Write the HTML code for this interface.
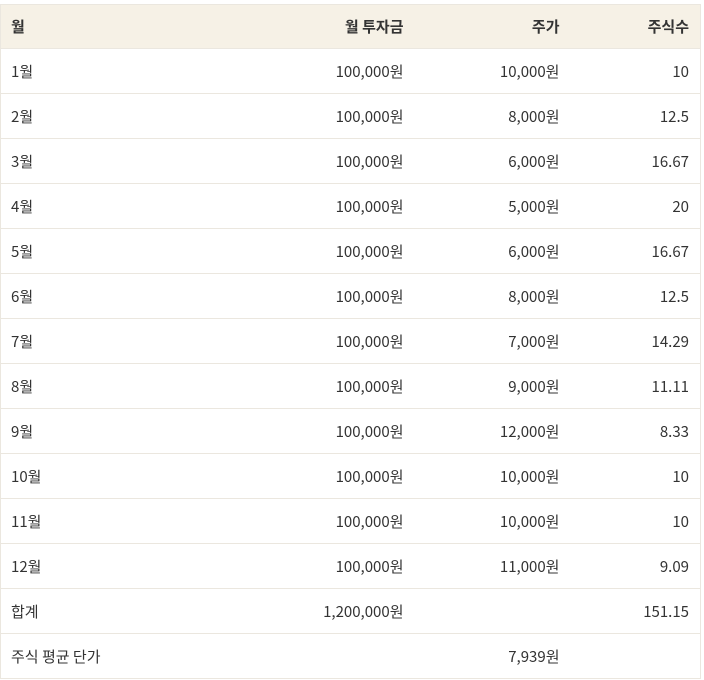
<!DOCTYPE html>
<html><head><meta charset="utf-8"><style>
body{margin:0;background:#fff;}
table{position:absolute;left:0;top:4px;border-collapse:collapse;width:700px;table-layout:fixed;font-family:"Noto Sans CJK KR","Liberation Sans",sans-serif;font-size:15px;color:#333;border:1px solid #ebe7df;}
th,td{height:44px;padding:0 10px;border-bottom:1px solid #ebe7df;text-align:right;box-sizing:border-box;line-height:20px;}
td{height:45px;padding-top:2px;}
th{background:#f6f1e6;font-weight:bold;height:44px;padding-top:1px;}
th:first-child,td:first-child{text-align:left;}
th:last-child,td:last-child{padding-right:11px;}
</style></head><body>
<table>
<colgroup><col style="width:250px"><col style="width:163px"><col style="width:156px"><col style="width:131px"></colgroup>
<tr><th>월</th><th>월 투자금</th><th>주가</th><th>주식수</th></tr>
<tr><td>1월</td><td>100,000원</td><td>10,000원</td><td>10</td></tr>
<tr><td>2월</td><td>100,000원</td><td>8,000원</td><td>12.5</td></tr>
<tr><td>3월</td><td>100,000원</td><td>6,000원</td><td>16.67</td></tr>
<tr><td>4월</td><td>100,000원</td><td>5,000원</td><td>20</td></tr>
<tr><td>5월</td><td>100,000원</td><td>6,000원</td><td>16.67</td></tr>
<tr><td>6월</td><td>100,000원</td><td>8,000원</td><td>12.5</td></tr>
<tr><td>7월</td><td>100,000원</td><td>7,000원</td><td>14.29</td></tr>
<tr><td>8월</td><td>100,000원</td><td>9,000원</td><td>11.11</td></tr>
<tr><td>9월</td><td>100,000원</td><td>12,000원</td><td>8.33</td></tr>
<tr><td>10월</td><td>100,000원</td><td>10,000원</td><td>10</td></tr>
<tr><td>11월</td><td>100,000원</td><td>10,000원</td><td>10</td></tr>
<tr><td>12월</td><td>100,000원</td><td>11,000원</td><td>9.09</td></tr>
<tr><td>합계</td><td>1,200,000원</td><td></td><td>151.15</td></tr>
<tr><td>주식 평균 단가</td><td></td><td>7,939원</td><td></td></tr>
</table>
</body></html>
